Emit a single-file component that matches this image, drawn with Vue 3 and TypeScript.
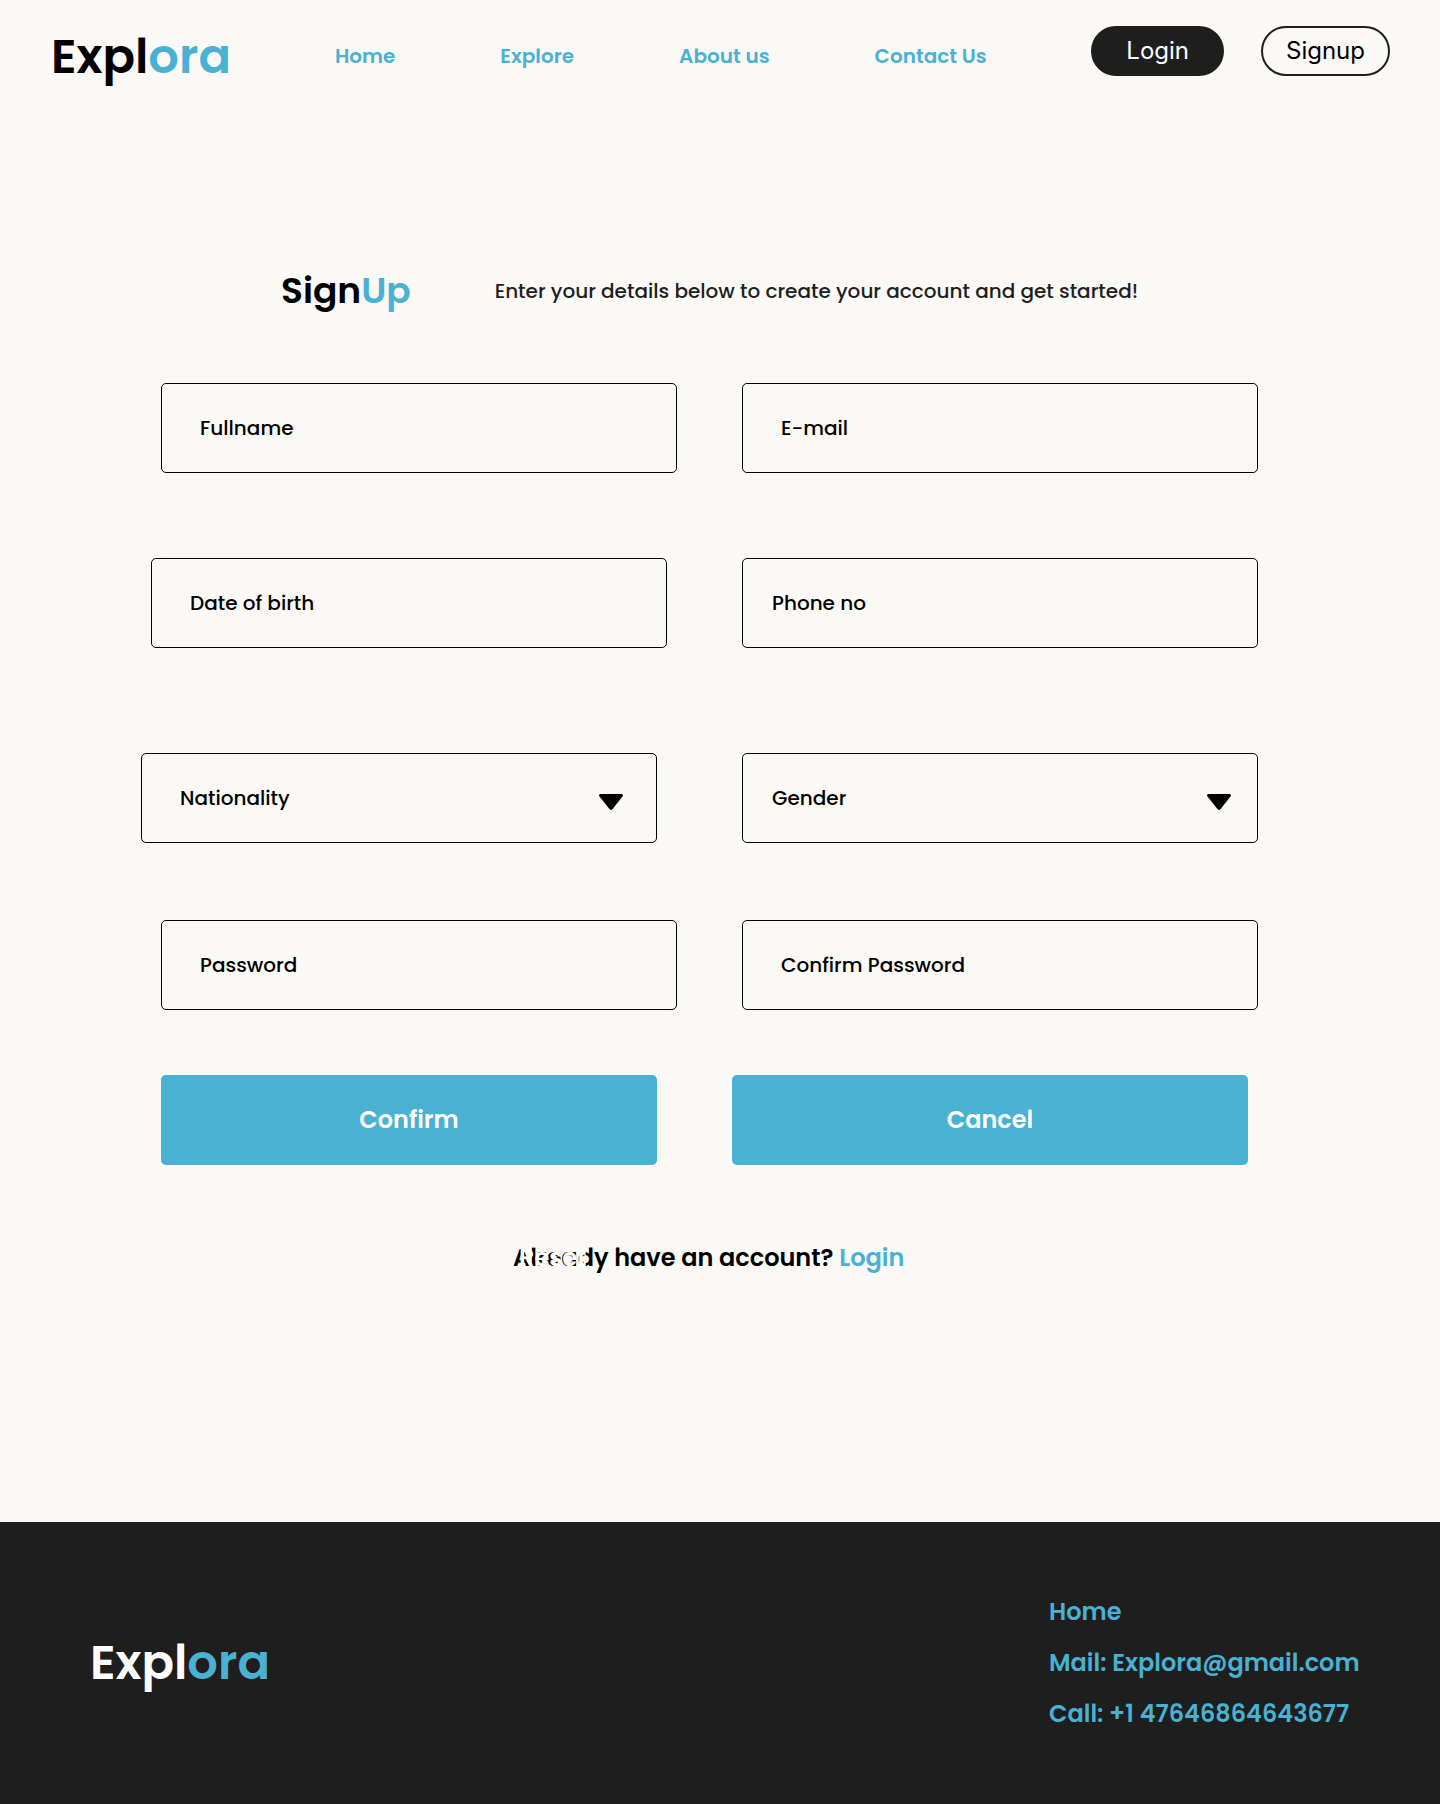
<script setup lang="ts">
import { reactive } from 'vue'

interface Field {
  id: string
  label: string
  kind: 'text' | 'email' | 'tel' | 'password' | 'select'
  compact?: boolean
  options?: string[]
}

interface Row {
  name: string
  fields: Field[]
}

const navLinks: string[] = ['Home', 'Explore', 'About us', 'Contact Us']

const rows: Row[] = [
  {
    name: 'identity',
    fields: [
      { id: 'fullname', label: 'Fullname', kind: 'text' },
      { id: 'email', label: 'E-mail', kind: 'email' },
    ],
  },
  {
    name: 'contact',
    fields: [
      { id: 'birth', label: 'Date of birth', kind: 'text' },
      { id: 'phone', label: 'Phone no', kind: 'tel', compact: true },
    ],
  },
  {
    name: 'profile',
    fields: [
      { id: 'nationality', label: 'Nationality', kind: 'select', options: ['American', 'British', 'Indian'] },
      { id: 'gender', label: 'Gender', kind: 'select', compact: true, options: ['Female', 'Male', 'Other'] },
    ],
  },
  {
    name: 'secret',
    fields: [
      { id: 'password', label: 'Password', kind: 'password' },
      { id: 'confirm', label: 'Confirm Password', kind: 'password' },
    ],
  },
]

const values = reactive<Record<string, string>>({
  fullname: '',
  email: '',
  birth: '',
  phone: '',
  nationality: '',
  gender: '',
  password: '',
  confirm: '',
})
</script>

<template>
  <div class="page">
    <header class="header">
      <a class="logo" href="#">Expl<span class="accent">ora</span></a>
      <nav class="nav">
        <a v-for="link in navLinks" :key="link" href="#">{{ link }}</a>
      </nav>
      <div class="auth">
        <button type="button" class="pill pill-dark">Login</button>
        <button type="button" class="pill pill-light">Signup</button>
      </div>
    </header>

    <main class="main">
      <div class="intro">
        <h1>Sign<span class="accent">Up</span></h1>
        <p>Enter your details below to create your account and get started!</p>
      </div>

      <form class="form" @submit.prevent>
        <div v-for="row in rows" :key="row.name" class="row" :class="row.name">
          <div v-for="field in row.fields" :key="field.id" class="field" :class="{ compact: field.compact }">
            <template v-if="field.kind === 'select'">
              <select :id="field.id" v-model="values[field.id]" :aria-label="field.label">
                <option value="">{{ field.label }}</option>
                <option v-for="option in field.options" :key="option" :value="option">{{ option }}</option>
              </select>
              <svg class="caret" viewBox="0 0 24 16" aria-hidden="true">
                <path d="M1.6 0H22.4C23.8 0 24.4 1.4 23.5 2.5L13.4 15.2C12.6 16.2 11.4 16.2 10.6 15.2L.5 2.5C-.4 1.4 .2 0 1.6 0Z" />
              </svg>
            </template>
            <input
              v-else
              :id="field.id"
              v-model="values[field.id]"
              :type="field.kind"
              :placeholder="field.label"
              :aria-label="field.label"
            />
          </div>
        </div>

        <div class="actions">
          <button type="submit" class="confirm">Confirm</button>
          <button type="button" class="cancel">Cancel</button>
        </div>

        <p class="switch">
          Already have an account? <a href="#">Login</a>
          <button type="reset" class="reset">Reset</button>
        </p>
      </form>
    </main>

    <footer class="footer">
      <a class="logo" href="#">Expl<span class="accent">ora</span></a>
      <ul class="contacts">
        <li><a href="#">Home</a></li>
        <li><a href="mailto:Explora@gmail.com">Mail: Explora@gmail.com</a></li>
        <li><a href="tel:+147646864643677">Call: +1 47646864643677</a></li>
      </ul>
    </footer>
  </div>
</template>

<style>
body {
  margin: 0;
  background: #faf9f6;
}
</style>

<style scoped>
.page {
  min-height: 100vh;
  display: flex;
  flex-direction: column;
  background: #faf9f6;
  color: #000;
  font-family: Poppins, Inter, sans-serif;
  font-weight: 500;
}

*,
*::before,
*::after {
  box-sizing: border-box;
}

a {
  color: #49b1d1;
  text-decoration: none;
}

button,
input,
select {
  font: inherit;
  color: inherit;
  margin: 0;
}

button {
  cursor: pointer;
}

.accent {
  color: #49b1d1;
}

.header {
  display: flex;
  align-items: flex-start;
  height: 86px;
  padding: 26px 50px 0 51px;
}

.logo {
  color: #000;
  font-size: 48px;
  font-weight: 600;
  line-height: 62px;
}

.nav {
  display: flex;
  gap: 105px;
  margin-left: 104px;
  font-size: 20px;
  font-weight: 600;
  line-height: 60px;
  white-space: nowrap;
}

.auth {
  display: flex;
  gap: 37px;
  margin-left: auto;
}

.pill {
  height: 50px;
  padding: 0 33px;
  border: 2px solid #1e1e1e;
  border-radius: 25px;
  font-family: Inter, sans-serif;
  font-size: 24px;
  font-weight: 400;
  line-height: 46px;
}

.pill-dark {
  background: #1e1e1e;
  color: #fff;
}

.pill-light {
  padding: 0 23px;
  background: transparent;
}

.main {
  flex: 1;
  padding: 175px 182px 244px 141px;
}

.intro {
  display: flex;
  align-items: center;
  gap: 84px;
  padding-left: 140px;
  line-height: 60px;
}

.intro h1 {
  margin: 0;
  font-size: 36px;
  font-weight: 600;
}

.intro p {
  margin: 0;
  color: #1e1e1e;
  font-size: 20px;
}

.form {
  margin-top: 62px;
}

.row {
  display: flex;
}

.identity,
.secret {
  gap: 65px;
  padding-left: 20px;
}

.contact {
  gap: 75px;
  margin-top: 85px;
  padding-left: 10px;
}

.profile {
  gap: 85px;
  margin-top: 105px;
}

.secret {
  margin-top: 77px;
}

.field {
  position: relative;
  flex: 1 1 0;
  min-width: 0;
}

.field input,
.field select {
  display: block;
  width: 100%;
  height: 90px;
  padding: 0 38px;
  border: 1px solid #000;
  border-radius: 5px;
  background: transparent;
  font-size: 20px;
  appearance: none;
}

.field.compact input,
.field.compact select {
  padding-left: 29px;
}

.field input::placeholder {
  color: #000;
  opacity: 1;
}

.caret {
  position: absolute;
  top: 41px;
  right: 34px;
  width: 24px;
  height: 16px;
  pointer-events: none;
}

.compact .caret {
  right: 27px;
}

.actions {
  display: flex;
  gap: 75px;
  margin-top: 65px;
  padding: 0 10px 0 20px;
}

.actions button {
  height: 90px;
  padding: 0 0 2px;
  border: 0;
  border-radius: 5px;
  background: #49b1d1;
  color: #fff;
  font-size: 24px;
  font-weight: 600;
}

.actions .confirm {
  flex: 496 1 0;
}

.actions .cancel {
  flex: 516 1 0;
}

.switch {
  position: relative;
  width: fit-content;
  margin: 73px 0 0 372px;
  font-size: 24px;
  font-weight: 600;
  line-height: 40px;
  white-space: nowrap;
}

.reset {
  position: absolute;
  top: 0;
  left: 6px;
  padding: 0;
  border: 0;
  background: none;
  color: #fff;
}

.footer {
  display: flex;
  align-items: center;
  justify-content: space-between;
  min-height: 282px;
  padding: 0 79px 0 90px;
  background: #1e1e1e;
}

.footer .logo {
  color: #fff;
}

.contacts {
  width: 312px;
  margin: 0;
  padding: 0 0 2px;
  list-style: none;
  font-size: 24px;
  font-weight: 600;
  line-height: 51px;
  white-space: nowrap;
}

@media (max-width: 1200px) {
  .header {
    flex-wrap: wrap;
    gap: 24px;
    height: auto;
  }

  .nav {
    gap: 32px;
    margin-left: 0;
  }

  .main {
    padding: 80px 40px;
  }

  .intro {
    flex-wrap: wrap;
    gap: 16px;
    padding-left: 0;
  }

  .switch {
    margin-left: auto;
    margin-right: auto;
  }
}
</style>
